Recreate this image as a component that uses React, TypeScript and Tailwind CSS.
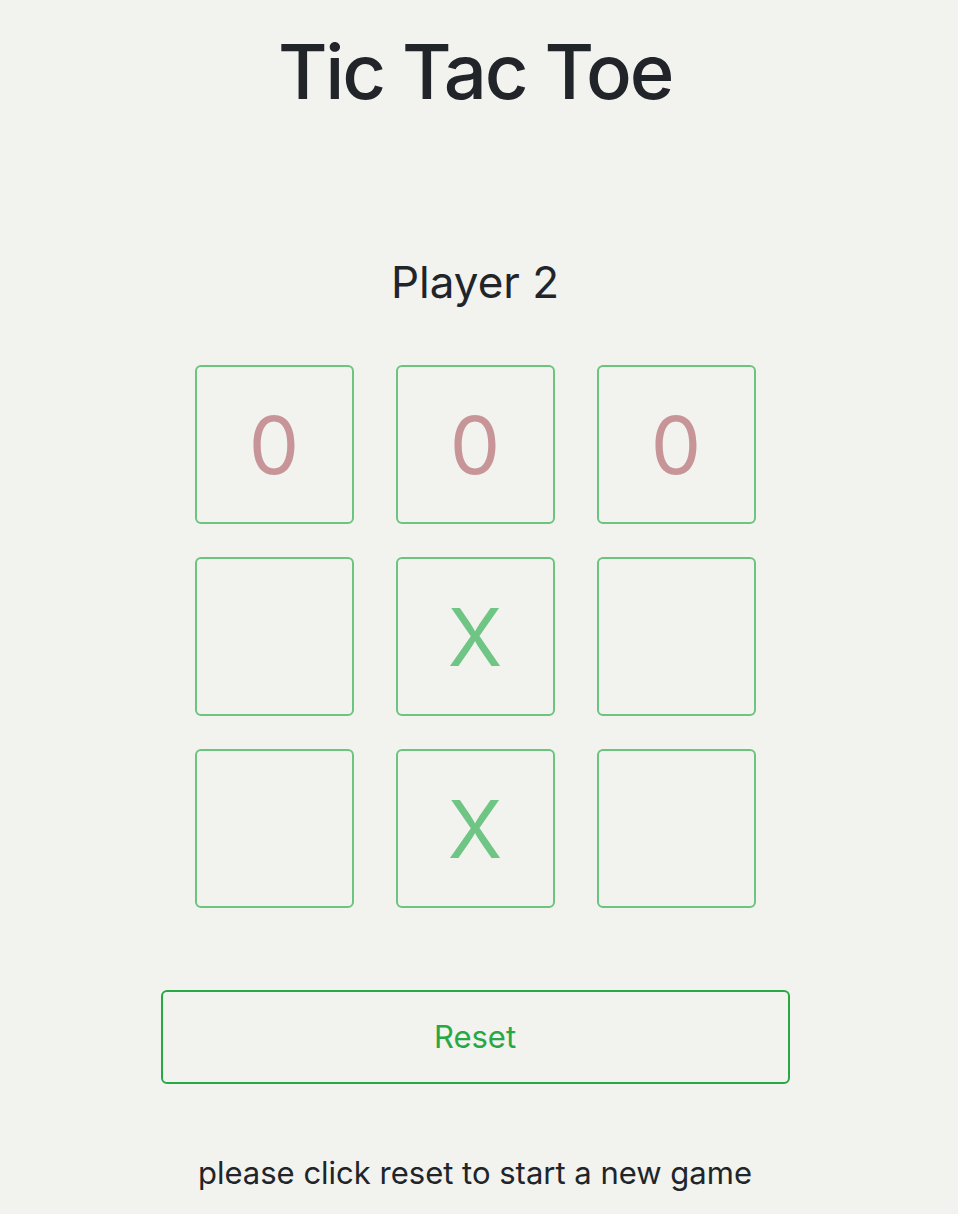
import React from "react";

const board = ["0", "0", "0", "", "X", "", "", "X", ""];

export default function App() {
  return (
    <div
      className="min-h-[1214px] w-full bg-[#f2f2ee] text-[#212529]"
      style={{ fontFamily: "Inter, 'Liberation Sans', sans-serif" }}
    >
      <div className="w-[950px] flex flex-col items-center">
        <h1 className="mt-[23px] text-[76px] leading-[96px] font-medium tracking-[-2.2px]">Tic Tac Toe</h1>
        <div className="mt-[135px] text-[44px] leading-[56px]">Player 2</div>
        <div className="mt-[55px] grid grid-cols-[159px_159px_159px] gap-x-[42px] gap-y-[33px]">
          {board.map((v, i) => (
            <div
              key={i}
              className={`w-[159px] h-[159px] rounded-[6px] border-2 border-[#6cc47e] flex items-center justify-center text-[80px] ${
                v === "X" ? "text-[#6fc584]" : "text-[#c79598]"
              }`}
            >
              {v}
            </div>
          ))}
        </div>
        <button className="mt-[82px] w-[629px] h-[94px] rounded-[6px] border-2 border-[#28a745] text-[#28a745] text-[31px]">
          Reset
        </button>
        <div className="mt-[69px] text-[31px] leading-[40px]">please click reset to start a new game</div>
      </div>
    </div>
  );
}
